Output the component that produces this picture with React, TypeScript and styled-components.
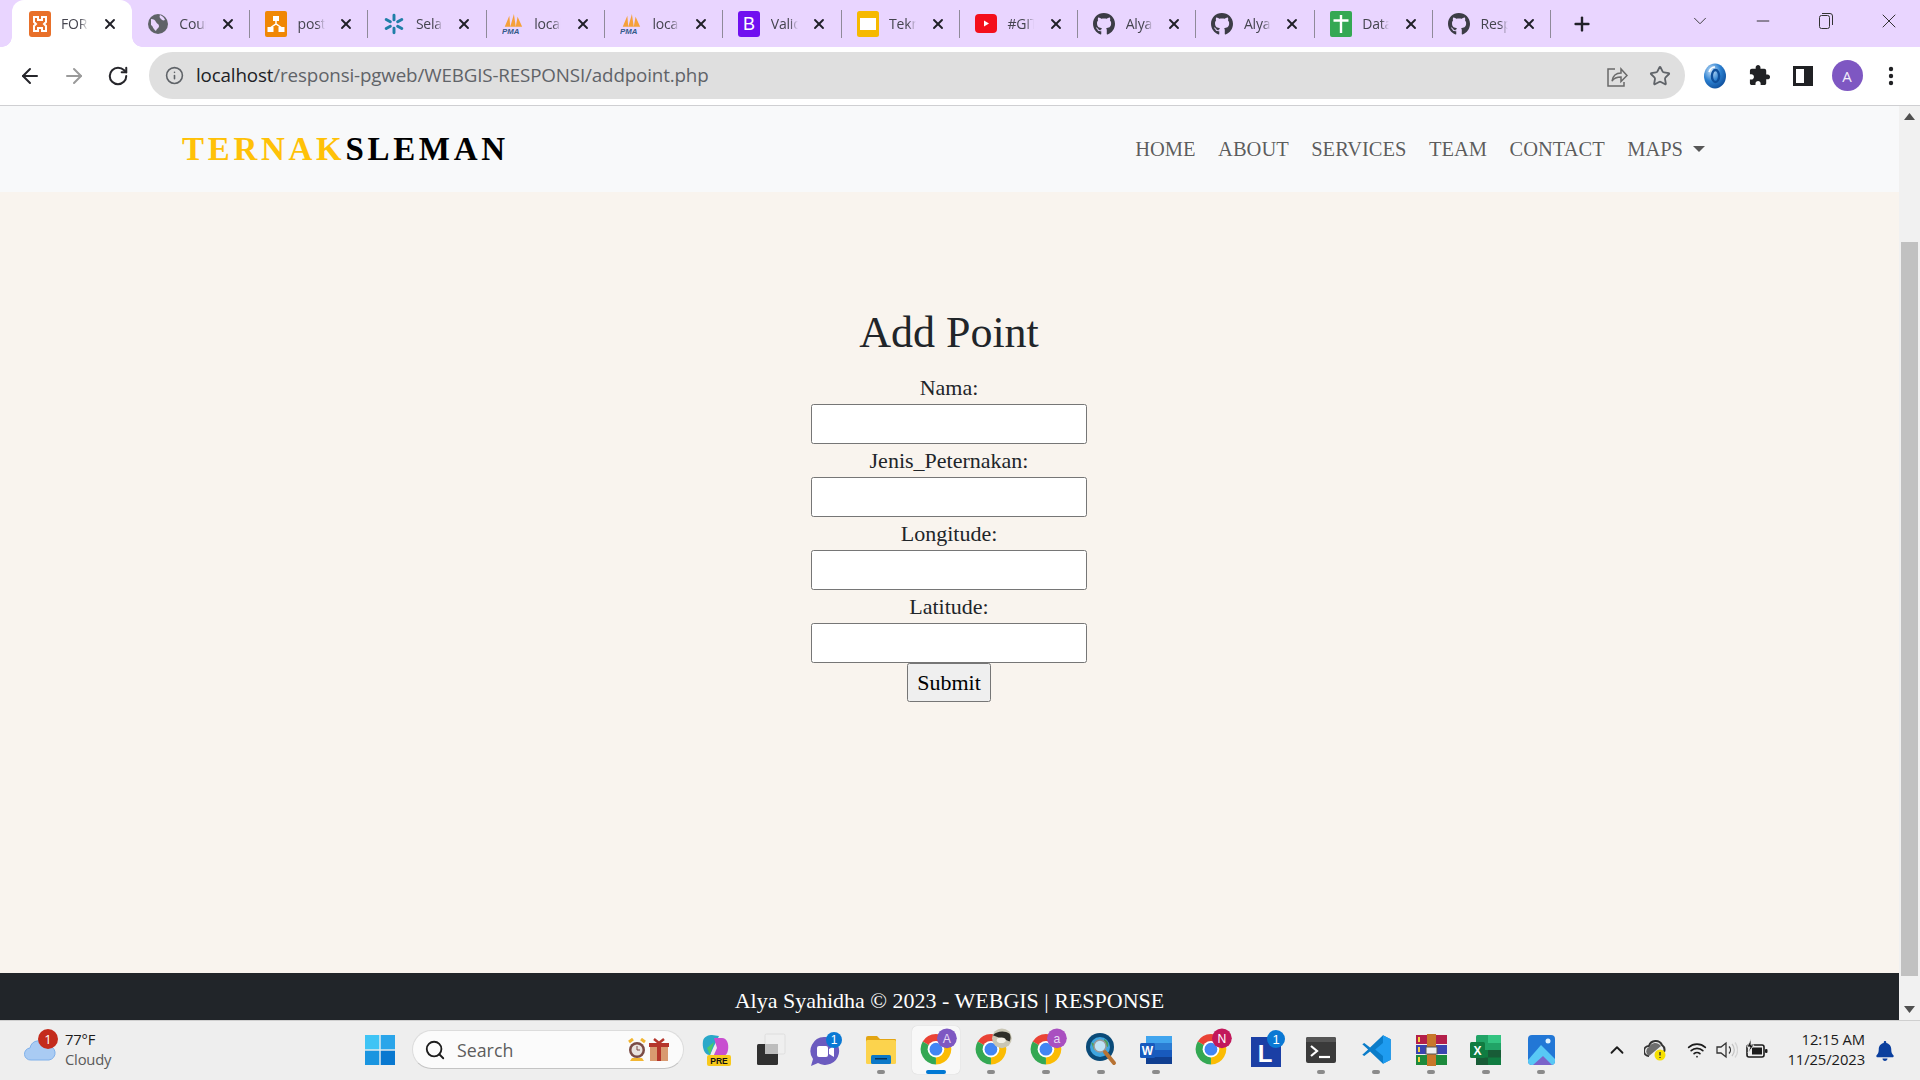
import React from 'react';
import styled, { createGlobalStyle } from 'styled-components';
import { ArrowLeft, ArrowRight, RotateCw, Info, Star, X, Plus, ChevronDown, Minus, ChevronUp, Wifi, Search } from 'lucide-react';
import { FaGithub, FaBell } from 'react-icons/fa';

const Global = createGlobalStyle`
  html, body { margin: 0; padding: 0; height: 100%; overflow: hidden; }
  body { font-family: "Liberation Serif", serif; background: #fff; }
  * { box-sizing: border-box; }
`;

const UI = '"Open Sans", "Noto Sans", sans-serif';

const Screen = styled.div`
  width: 1920px; height: 1080px; display: flex; flex-direction: column; overflow: hidden;
`;
const TabStrip = styled.div`
  height: 47px; background: #e9d5ff; display: flex; align-items: stretch; padding-left: 13.5px; flex: none;
`;
const Tab = styled.div<{ $active?: boolean }>`
  position: relative; flex: none;
  width: ${p => (p.$active ? '120.3px' : '118.3px')};
  margin-left: ${p => (p.$active ? '-2px' : '0')};
  padding-left: ${p => (p.$active ? '17px' : '15px')};
  display: flex; align-items: center;
  background: ${p => (p.$active ? '#fff' : 'transparent')};
  border-radius: ${p => (p.$active ? '12px 12px 0 0' : '0')};
  &::after {
    content: ''; position: absolute; right: 0; top: 10px; height: 28px; width: 1px;
    background: ${p => (p.$active ? 'transparent' : '#8f8a99')};
  }
`;
const Flare = styled.span<{ $side: 'left' | 'right' }>`
  position: absolute; bottom: 0; width: 10px; height: 10px;
  ${p => (p.$side === 'left' ? 'left: -10px;' : 'right: -10px;')}
  background: radial-gradient(circle at ${p => (p.$side === 'left' ? '0 0' : '100% 0')}, transparent 9.5px, #fff 10px);
`;
const FavSlot = styled.span`
  width: 22px; height: 26px; display: flex; align-items: center; justify-content: center; flex: none; color: #3c3c46;
`;
const TabTitle = styled.span`
  margin-left: 10.5px; width: 27px; overflow: hidden; white-space: nowrap; flex: none;
  font: 14px ${UI}; color: #45454f; letter-spacing: -0.2px;
  -webkit-mask-image: linear-gradient(to right, #000 70%, transparent);
  mask-image: linear-gradient(to right, #000 70%, transparent);
`;
const TabClose = styled.span`
  margin-left: 13.5px; width: 16px; height: 16px; display: flex; align-items: center; justify-content: center; color: #202028; flex: none;
`;
const NewTab = styled.span`
  margin-left: 20px; width: 22px; display: flex; align-items: center; justify-content: center; color: #202028; flex: none;
`;
const WindowControls = styled.div`
  margin-left: auto; display: flex; align-items: flex-start; color: #333;
`;
const WindowBtn = styled.span`
  width: 63px; height: 42px; display: flex; align-items: center; justify-content: center;
`;
const Toolbar = styled.div`
  height: 59px; flex: none; background: #fff; border-bottom: 1px solid #cfcfd2;
  display: flex; align-items: center; padding: 0 0 1px 18px;
`;
const NavIcon = styled.span<{ $dim?: boolean }>`
  width: 44px; height: 30px; margin-right: ${p => (p.$dim ? '1px' : '0')}; display: flex; align-items: center; justify-content: flex-start;
  color: ${p => (p.$dim ? '#9a9a9a' : '#26262b')};
  flex: none;
`;
const Omnibox = styled.div`
  height: 47px; width: 1536px; margin-left: -2px; border-radius: 24px; background: #dfdfdf; flex: none;
  display: flex; align-items: center; padding: 0 14px 0 16px;
`;
const Url = styled.div`
  margin-left: 12px; font: 18.8px ${UI}; color: #5f6368; white-space: nowrap; letter-spacing: -0.15px; margin-top: -1px;
`;
const UrlHost = styled.span` color: #202124; `;
const OmniActions = styled.div`
  margin-left: auto; display: flex; gap: 21px; align-items: center; color: #5f6368;
`;
const ToolActions = styled.div`
  margin-left: 8px; display: flex; align-items: center; gap: 0;
`;
const ToolBtn = styled.span`
  width: 44px; height: 36px; display: flex; align-items: center; justify-content: center; color: #202124;
`;
const Avatar = styled.span`
  width: 31px; height: 31px; border-radius: 50%; background: #7e57c2; color: #f3ecfb;
  font: 15px ${UI}; display: flex; align-items: center; justify-content: center;
`;
const Viewport = styled.div`
  flex: 1; min-height: 0; display: flex;
`;
const Page = styled.div`
  flex: 1; min-width: 0; display: flex; flex-direction: column;
`;
const NavBar = styled.nav`
  height: 86px; flex: none; background: #f8f9fa; display: flex; align-items: center; padding: 0 194px 0 182px;
`;
const Brand = styled.div`
  font: bold 33px "Liberation Serif", serif; letter-spacing: 3.7px; color: #ffc107; white-space: nowrap; padding-top: 1px;
`;
const BrandDark = styled.span` color: #000; `;
const NavLinks = styled.div`
  margin-left: auto; display: flex; align-items: center; gap: 22.5px;
`;
const NavLink = styled.a`
  font: 20.5px "Liberation Serif", serif; color: rgba(0,0,0,.65); display: flex; align-items: center; white-space: nowrap;
`;
const Caret = styled.span`
  margin-left: 10px; width: 0; height: 0; border-left: 6px solid transparent; border-right: 6px solid transparent; border-top: 6px solid rgba(0,0,0,.65);
`;
const Content = styled.main`
  flex: 1; background: #f9f4ee; padding: 111px 1px 0 0; display: flex; flex-direction: column; align-items: center; color: #212529;
`;
const Title = styled.h1`
  margin: 0 0 8px; font: 400 44px/60px "Liberation Serif", serif;
`;
const Form = styled.form`
  display: flex; flex-direction: column; align-items: center;
`;
const FieldLabel = styled.label`
  display: block; height: 33px; font: 22px/34px "Liberation Serif", serif; text-align: center;
`;
const Input = styled.input`
  display: block; width: 276px; height: 40px; background: #fff; border: 1px solid #767676; border-radius: 2.5px; padding: 0 2px; outline: none;
`;
const SubmitBtn = styled.button`
  width: 84px; height: 39px; margin-top: 0; background: #efefef; border: 1px solid #767676; border-radius: 2.5px;
  font: 22px "Liberation Serif", serif; color: #000; padding: 0;
`;
const Footer = styled.footer`
  height: 47px; flex: none; background: #212529; color: #fff; text-align: center;
  font: 22px/1 "Liberation Serif", serif; padding-top: 17px;
`;
const ScrollBar = styled.div`
  width: 21px; flex: none; background: #f1f1f1; display: flex; flex-direction: column; align-items: center; padding-bottom: 0;
`;
const ScrollBtn = styled.span`
  height: 21px; flex: none; display: flex; align-items: center; justify-content: center;
`;
const ScrollTrack = styled.div`
  flex: 1; width: 100%; padding: 115px 2px 23px 2px; display: flex;
`;
const ScrollThumb = styled.div`
  flex: 1; background: #c1c1c1;
`;
const Taskbar = styled.div`
  height: 60px; flex: none; background: #eeeeee; border-top: 1px solid #cfcfcf; display: flex; align-items: center; position: relative; padding-bottom: 2px;
`;
const Weather = styled.div`
  width: 352.5px; flex: none; display: flex; align-items: center; padding-left: 24px; position: relative;
`;
const CloudWrap = styled.span`
  display: flex; margin-top: -3px;
`;
const WeatherBadge = styled.span`
  position: absolute; left: 38px; top: -2px; width: 20px; height: 20px; border-radius: 50%; background: #c42b1c; color: #fff;
  font: 13px/20px ${UI}; text-align: center;
`;
const WeatherText = styled.div`
  margin: -2px 0 0 9px; font: 14.8px/20px ${UI}; color: #1b1b1b; letter-spacing: -0.2px;
`;
const WeatherSub = styled.div` color: #5a5a5a; `;
const Slot = styled.span<{ $active?: boolean }>`
  position: relative; flex: none; width: 55px; height: 48px; display: flex; align-items: center; justify-content: center;
  &::before {
    content: ''; position: absolute; left: 3.5px; right: 3.5px; top: 0; bottom: 0; border-radius: 5px; z-index: 0;
    background: ${p => (p.$active ? '#f8f8f8' : 'transparent')};
    box-shadow: ${p => (p.$active ? '0 0 1px rgba(0,0,0,.2)' : 'none')};
  }
  & > svg { position: relative; z-index: 1; }
`;
const Dot = styled.span<{ $active?: boolean }>`
  position: absolute; bottom: 0; left: 50%; transform: translateX(-50%); z-index: 1;
  width: ${p => (p.$active ? '20px' : '8px')}; height: 4px; border-radius: 2px;
  background: ${p => (p.$active ? '#0078d4' : '#8a8a8a')};
`;
const SearchPill = styled.div`
  width: 272px; height: 39px; margin: 0 4.5px; flex: none; background: #fbfbfb; border-radius: 20px; border: 1px solid #dcdcdc; border-bottom-color: #c4c4c4;
  display: flex; align-items: center; padding: 0 11px 0 11px; color: #1c1c1c;
`;
const SearchText = styled.span` margin-left: 11px; font: 17.8px ${UI}; color: #5d5d5d; `;
const SearchArt = styled.span` margin-left: auto; display: flex; gap: 2px; align-items: center; margin-right: 3px; `;
const Tray = styled.div`
  position: absolute; right: 0; top: 0; bottom: 2px; display: flex; align-items: center; color: #1c1c1c;
`;
const TrayIcon = styled.span<{ $w: number }>`
  width: ${p => p.$w}px; display: flex; align-items: center; justify-content: center;
`;
const Clock = styled.div`
  margin: -1px 0 0 14px; text-align: right; font: 14.8px/20px ${UI}; color: #1b1b1b; letter-spacing: -0.1px;
`;
const BellSlot = styled.span`
  width: 40px; display: flex; justify-content: center; color: #0a3f9e; margin-right: 15px; padding-top: 2px;
`;

/* ---------- drawings ---------- */
const Xampp = () => (
  <svg width="22" height="26" viewBox="0 0 22 26"><rect width="22" height="26" rx="3" fill="#e8702a" />
    <path d="M5 6h4v3h4V6h4v5l-2 2 2 2v5h-4v-3H9v3H5v-5l2-2-2-2z" fill="none" stroke="#fff" strokeWidth="2" /></svg>
);
const Globe = () => (
  <svg width="22" height="22" viewBox="0 0 22 22"><circle cx="11" cy="11" r="10" fill="#5f6368" />
    <path d="M4 6c3 0 4 1 5 3s3 2 3 4-2 2-3 5c-3-2-3-5-5-6zM13 2c2 1 4 2 5 5-2 1-3 0-4-1s-2-2-1-4z" fill="#e9d5ff" /></svg>
);
const Drawio = () => (
  <svg width="22" height="26" viewBox="0 0 22 26"><rect width="22" height="26" rx="2" fill="#f08705" />
    <path d="M11 9v4M5 17l6-4 6 4" stroke="#fff" strokeWidth="1.5" fill="none" /><rect x="8" y="5" width="6" height="5" fill="#fff" /><rect x="2.5" y="16" width="6" height="5" fill="#fff" /><rect x="13.5" y="16" width="6" height="5" fill="#fff" /></svg>
);
const Kaggleish = () => (
  <svg width="24" height="24" viewBox="0 0 24 24" stroke="#1f7ea8" strokeWidth="3.2" strokeLinecap="round">
    <path d="M12 2.5v5M12 16.5v5" /><path d="M3.5 7l4.5 2.6M16 14.4l4.5 2.6M3.5 17l4.5-2.6M16 9.6l4.5-2.6" /></svg>
);
const Pma = () => (
  <svg width="24" height="26" viewBox="0 0 24 26"><path d="M3 16L8 4l1 12zM9 16l4-14 2 14zM15 16l2-11 5 11z" fill="#f5a13a" />
    <text x="0" y="24" fontFamily="Liberation Sans" fontSize="8.5" fontWeight="bold" fontStyle="italic" fill="#345a8a">PMA</text></svg>
);
const BootstrapIcon = () => (
  <svg width="22" height="26" viewBox="0 0 22 26"><rect width="22" height="26" rx="3" fill="#7010f0" />
    <text x="11" y="19" textAnchor="middle" fontFamily="Liberation Sans" fontSize="18" fill="#fff">B</text></svg>
);
const Slides = () => (
  <svg width="22" height="26" viewBox="0 0 22 26"><rect width="22" height="26" rx="2.5" fill="#f6b900" /><rect x="3" y="7" width="16" height="12" fill="#fff" /></svg>
);
const YouTube = () => (
  <svg width="22" height="20" viewBox="0 0 22 20"><rect width="22" height="19" rx="4" fill="#f40f1b" /><path d="M9 6.5l5 3-5 3z" fill="#fff" /></svg>
);
const Sheets = () => (
  <svg width="22" height="26" viewBox="0 0 22 26"><rect width="22" height="26" rx="2" fill="#34a853" /><path d="M11 4v18M3.5 9.5h15" stroke="#fff" strokeWidth="2.4" /></svg>
);

const Chrome = ({ badge }: { badge?: React.ReactNode }) => (
  <svg width="36" height="38.5" viewBox="0 0 28 30" overflow="visible">
    <g transform="translate(1 2) scale(1.08)">
      <path d="M12 12L2.47 6.5A11 11 0 0 1 21.53 6.5Z" fill="#ea4335" />
      <path d="M12 12L21.53 6.5A11 11 0 0 1 12 23Z" fill="#fbbc04" />
      <path d="M12 12L12 23A11 11 0 0 1 2.47 6.5Z" fill="#34a853" />
      <circle cx="12" cy="12" r="6" fill="#fff" /><circle cx="12" cy="12" r="4.6" fill="#4285f4" />
    </g>
    {badge}
  </svg>
);

const Copilot = () => (
  <svg width="32" height="34" viewBox="0 0 32 34"><path d="M3 8c1-5 6-6 9-6l7 1-5 10-4 9c-6 0-8-8-7-14z" fill="#2aa8c9" />
    <path d="M14 5h8c5 0 7 6 6 12s-5 7-9 7h-6l4-9z" fill="#c84fd0" /><path d="M7 15l7-6-4 13z" fill="#4aca6a" />
    <rect x="7" y="22" width="24" height="11" rx="2" fill="#f8c91c" />
    <text x="19" y="31" textAnchor="middle" fontFamily="Liberation Sans" fontSize="8.5" fontWeight="bold" fill="#111">PRE</text></svg>
);
const TaskView = () => (
  <svg width="30" height="34" viewBox="0 0 30 34"><rect x="9" y="1" width="20" height="20" rx="1.5" fill="#efefef" stroke="#dedede" />
    <rect x="1" y="11" width="21" height="21" rx="1.5" fill="#303030" /><rect x="9" y="11" width="13" height="10" fill="#bdbdbd" /></svg>
);
const Teams = () => (
  <svg width="38" height="36" viewBox="0 0 38 36"><path d="M17 5a14 14 0 1 1-6 26l-7 3 2-7A14 14 0 0 1 17 5z" fill="#6b5bbf" />
    <rect x="10" y="14" width="11" height="11" rx="2" fill="#fff" /><path d="M22 17l5-3v11l-5-3z" fill="#fff" />
    <circle cx="27" cy="8" r="8" fill="#0a78d4" /><text x="27" y="12" textAnchor="middle" fontFamily="Liberation Sans" fontSize="12" fill="#fff">1</text></svg>
);
const Folder = () => (
  <svg width="32" height="30" viewBox="0 0 32 30"><path d="M1 3a2 2 0 0 1 2-2h9l3 3h15a1 1 0 0 1 1 1v3H1z" fill="#e3a512" /><rect x="1" y="5" width="30" height="24" rx="1.5" fill="#fcd34d" />
    <rect x="6" y="20" width="20" height="9" rx="1.5" fill="#0b78c8" /><rect x="10" y="23" width="12" height="1.5" fill="#06335d" /></svg>
);
const Magnifier = () => (
  <svg width="32" height="36" viewBox="0 0 32 36"><circle cx="15" cy="15" r="14" fill="#0a4a78" /><circle cx="15" cy="15" r="10" fill="#3fa6e0" />
    <path d="M19 7c4 2 5 4 4 8l-4-2zM6 10l5 3-2 5z" fill="#4b9e5c" /><circle cx="15" cy="14" r="6" fill="#bfe3f5" stroke="#9a9a9a" strokeWidth="1.5" />
    <path d="M20 20l9 11" stroke="#b87333" strokeWidth="4" strokeLinecap="round" /></svg>
);
const Word = () => (
  <svg width="32" height="30" viewBox="0 0 32 30"><rect x="6" y="1" width="26" height="28" rx="1.5" fill="#2b7cd3" /><rect x="6" y="1" width="26" height="7" fill="#41a5ee" /><rect x="6" y="15" width="26" height="7" fill="#185abd" /><rect x="6" y="22" width="26" height="7" fill="#103f91" />
    <rect x="0" y="8" width="15" height="15" rx="1.5" fill="#185abd" /><text x="7.5" y="20" textAnchor="middle" fontFamily="Liberation Sans" fontSize="12" fontWeight="bold" fill="#fff">W</text></svg>
);
const LApp = () => (
  <svg width="38" height="38" viewBox="0 0 38 38" overflow="visible"><rect x="4" y="6" width="30" height="30" fill="#1b3fa5" />
    <text x="18" y="31" textAnchor="middle" fontFamily="Liberation Sans" fontSize="24" fontWeight="bold" fill="#fff">L</text>
    <circle cx="29" cy="8" r="9" fill="#0a78d4" /><text x="29" y="12.5" textAnchor="middle" fontFamily="Liberation Sans" fontSize="13" fill="#fff">1</text></svg>
);
const Terminal = () => (
  <svg width="30" height="26" viewBox="0 0 30 26"><rect width="30" height="26" rx="2" fill="#3a3a3a" /><path d="M0 2a2 2 0 0 1 2-2h26a2 2 0 0 1 2 2v3H0z" fill="#555" />
    <path d="M5 9l6 5-6 5" stroke="#fff" strokeWidth="2.2" fill="none" /><path d="M13 20h11" stroke="#fff" strokeWidth="2.2" /></svg>
);
const VsCode = () => (
  <svg width="31" height="31" viewBox="0 0 24 24"><path d="M17 1l6 3v16l-6 3-10-9.5L2.5 17 1 16l4.5-4L1 8l1.5-1L7 10.5z" fill="#0a7cc9" />
    <path d="M17 1l6 3v16l-6 3V17l-6-5 6-5z" fill="#1f9cf0" /></svg>
);
const WinRar = () => (
  <svg width="31" height="32" viewBox="0 0 31 32"><rect x="0" y="1" width="31" height="9" fill="#b31f4a" /><rect x="0" y="11" width="31" height="9" fill="#3a44b0" /><rect x="0" y="21" width="31" height="10" fill="#1c8a3c" />
    <rect x="11" y="0" width="9" height="32" fill="#c8772a" /><rect x="10" y="13" width="11" height="7" fill="#eee" stroke="#555" /><path d="M3 3v5M3 13v5M3 23v5" stroke="#f5d040" strokeWidth="2" /></svg>
);
const Excel = () => (
  <svg width="32" height="32" viewBox="0 0 32 32"><rect x="6" y="1" width="25" height="30" rx="1.5" fill="#21a366" /><rect x="18" y="1" width="13" height="8" fill="#33c481" /><rect x="6" y="16" width="25" height="15" fill="#107c41" /><rect x="18" y="16" width="13" height="7.5" fill="#185c37" /><rect x="6" y="23.5" width="12" height="7.5" fill="#185c37" />
    <rect x="0" y="8" width="15" height="16" rx="1.5" fill="#107c41" /><text x="7.5" y="21" textAnchor="middle" fontFamily="Liberation Sans" fontSize="12" fontWeight="bold" fill="#fff">X</text></svg>
);
const Photos = () => (
  <svg width="27" height="30" viewBox="0 0 27 30"><rect width="27" height="30" rx="4" fill="#2277d6" /><circle cx="20" cy="6" r="2.5" fill="#dff1ff" />
    <path d="M0 25l13-15 14 14v2a4 4 0 0 1-4 4H4a4 4 0 0 1-4-4z" fill="#58c8f5" /><path d="M5 30l10-9 9 9z" fill="#7a63c9" /></svg>
);
const WindowsLogo = () => (
  <svg width="30" height="30" viewBox="0 0 30 30"><rect width="14.3" height="14.3" fill="#3fc4f5" /><rect x="15.7" width="14.3" height="14.3" fill="#2aa5ea" /><rect y="15.7" width="14.3" height="14.3" fill="#1a95e0" /><rect x="15.7" y="15.7" width="14.3" height="14.3" fill="#0878d0" /></svg>
);
const CloudArt = () => (
  <svg width="32" height="26" viewBox="0 0 32 26"><path d="M7 25a6 6 0 0 1-1-12 9 9 0 0 1 17-2 7 7 0 0 1 2 14z" fill="#a9cbf3" stroke="#7fb0ea" /></svg>
);
const AlarmGift = () => (
  <>
    <svg width="20" height="24" viewBox="0 0 20 24"><path d="M2 4l4-3M18 4l-4-3" stroke="#f2b632" strokeWidth="3" /><circle cx="10" cy="12" r="8" fill="#7a4b46" /><circle cx="10" cy="12" r="5.5" fill="#e9e3e0" /><path d="M10 8v4h3" stroke="#7a4b46" fill="none" /><path d="M5 20h10l2 3H3z" fill="#f2b632" /></svg>
    <svg width="20" height="24" viewBox="0 0 20 24"><rect x="1" y="8" width="18" height="15" fill="#d99a70" /><rect x="0" y="5" width="20" height="4" fill="#b5352b" /><rect x="8" y="5" width="4" height="18" fill="#b5352b" /><path d="M10 5L5 1M10 5l5-4" stroke="#b5352b" strokeWidth="2.5" /></svg>
  </>
);
const Share = () => (
  <svg width="22" height="22" viewBox="0 0 22 22" fill="none" stroke="#6a6a6a" strokeWidth="1.5"><path d="M9 4H2v17h16v-4" /><path d="M6 16c1-6 5-8 9-8V4l6 6.5-6 6V12c-4 0-7 1-9 4z" /></svg>
);
const Panel = () => (
  <svg width="20" height="20" viewBox="0 0 20 20"><rect x="1.5" y="1.5" width="17" height="17" fill="#fff" stroke="#202124" strokeWidth="3" /><rect x="11" y="1" width="8" height="18" fill="#202124" /></svg>
);
const Dots = () => (
  <svg width="6" height="22" viewBox="0 0 6 22" fill="#202124"><circle cx="3" cy="4" r="2.2" /><circle cx="3" cy="11" r="2.2" /><circle cx="3" cy="18" r="2.2" /></svg>
);
const IeExt = () => (
  <svg width="24" height="26" viewBox="0 0 24 26">
    <defs><radialGradient id="ie" cx="35%" cy="30%" r="75%"><stop offset="0" stopColor="#cfe6fa" /><stop offset="0.55" stopColor="#2a7fd0" /><stop offset="1" stopColor="#0f4f9c" /></radialGradient></defs>
    <ellipse cx="12" cy="13" rx="11" ry="12.5" fill="url(#ie)" /><ellipse cx="12.5" cy="13" rx="3.6" ry="6" fill="none" stroke="#0f4f9c" strokeWidth="2.4" /><path d="M6 9c1-3 3-5 6-5" fill="none" stroke="#fff" strokeWidth="1.5" /></svg>
);
const Puzzle = () => (
  <svg width="23" height="23" viewBox="0 0 24 24" fill="#202124"><path d="M20.5 11H19V7c0-1.1-.9-2-2-2h-4V3.5C13 2.12 11.88 1 10.5 1S8 2.12 8 3.5V5H4c-1.1 0-1.99.9-1.99 2v3.8H3.5c1.49 0 2.7 1.21 2.7 2.7s-1.21 2.7-2.7 2.7H2V20c0 1.1.9 2 2 2h3.8v-1.5c0-1.49 1.21-2.7 2.7-2.7 1.49 0 2.7 1.21 2.7 2.7V22H17c1.1 0 2-.9 2-2v-4h1.5c1.38 0 2.5-1.12 2.5-2.5S21.88 11 20.5 11z" /></svg>
);
const RestoreIcon = () => (
  <svg width="14" height="16" viewBox="0 0 14 16" fill="none" stroke="#333"><rect x=".5" y="2.5" width="10" height="13" rx="2" /><path d="M3 .5h8a2.5 2.5 0 0 1 2.5 2.5v9" /></svg>
);
const OneDrive = () => (
  <svg width="24" height="22" viewBox="0 0 24 22"><path d="M5 17a5 5 0 0 1 0-10 7 7 0 0 1 13-1 6 6 0 0 1 2 7" fill="none" stroke="#333" strokeWidth="2" /><path d="M5 17a5 5 0 0 1 0-9 7 7 0 0 1 12-1z" fill="#6d6d6d" /><circle cx="16" cy="16" r="5.5" fill="#f6e000" /><path d="M16 13v3.5M16 18v1" stroke="#333" strokeWidth="1.4" /></svg>
);
const Speaker = () => (
  <svg width="22" height="20" viewBox="0 0 22 20" fill="none" stroke="#333" strokeWidth="1.3"><path d="M1 7h4l5-4v14l-5-4H1z" /><path d="M13 6.5a5 5 0 0 1 0 7" /><path d="M16 4a9 9 0 0 1 0 12" stroke="#c4c4c4" /><path d="M19 2.5a12 12 0 0 1 0 15" stroke="#d4d4d4" /></svg>
);
const Battery = () => (
  <svg width="24" height="22" viewBox="0 0 24 22"><rect x="2" y="6" width="17" height="12" rx="2" fill="none" stroke="#1c1c1c" strokeWidth="1.6" /><rect x="7" y="8.5" width="10" height="7" fill="#1c1c1c" /><rect x="20" y="10" width="2.5" height="4" rx="1" fill="#1c1c1c" /><path d="M6 0L2 8h3l-2 6 6-8H6z" fill="#1c1c1c" stroke="#eee" strokeWidth=".8" /></svg>
);
const Arrow = ({ up }: { up?: boolean }) => (
  <svg width="11" height="7" viewBox="0 0 11 7"><path d={up ? 'M5.5 0L11 7H0z' : 'M0 0h11L5.5 7z'} fill="#505050" /></svg>
);
const Badge = ({ fill, label, textFill = '#e8d9f5' }: { fill: string; label: string; textFill?: string }) => (
  <>
    <circle cx="22.5" cy="6.5" r="7.7" fill={fill} />
    <text x="22.5" y="10" textAnchor="middle" fontFamily="Liberation Sans" fontSize="9.5" fill={textFill}>{label}</text>
  </>
);
const PhotoBadge = () => (
  <>
    <circle cx="22.5" cy="6.5" r="7.7" fill="#c9c6b4" />
    <path d="M15.5 4c3-3 9-4 13-1 1 2 1 4 0 6-5-3-9-3-13-5z" fill="#2e2e28" />
    <ellipse cx="22" cy="8" rx="3.5" ry="2.2" fill="#f1efe6" />
  </>
);

const tabs: { icon: React.ReactNode; title: string; active?: boolean }[] = [
  { icon: <Xampp />, title: 'FORM', active: true },
  { icon: <Globe />, title: 'Cour' },
  { icon: <Drawio />, title: 'post' },
  { icon: <Kaggleish />, title: 'Selam' },
  { icon: <Pma />, title: 'local' },
  { icon: <Pma />, title: 'local' },
  { icon: <BootstrapIcon />, title: 'Valid' },
  { icon: <Slides />, title: 'Tekn' },
  { icon: <YouTube />, title: '#GIT' },
  { icon: <FaGithub size={26} />, title: 'Alya' },
  { icon: <FaGithub size={26} />, title: 'Alya' },
  { icon: <Sheets />, title: 'Data' },
  { icon: <FaGithub size={26} />, title: 'Resp' },
];

const dock: { icon: React.ReactNode; dot?: boolean; active?: boolean }[] = [
  { icon: <Copilot /> },
  { icon: <TaskView /> },
  { icon: <Teams /> },
  { icon: <Folder />, dot: true },
  { icon: <Chrome badge={<Badge fill="#7e57c2" label="A" />} />, dot: true, active: true },
  { icon: <Chrome badge={<PhotoBadge />} />, dot: true },
  { icon: <Chrome badge={<Badge fill="#a94fc0" label="a" />} />, dot: true },
  { icon: <Magnifier />, dot: true },
  { icon: <Word />, dot: true },
  { icon: <Chrome badge={<Badge fill="#c2185b" label="N" textFill="#fff" />} /> },
  { icon: <LApp /> },
  { icon: <Terminal />, dot: true },
  { icon: <VsCode />, dot: true },
  { icon: <WinRar />, dot: true },
  { icon: <Excel />, dot: true },
  { icon: <Photos />, dot: true },
];

export default function App() {
  return (
    <Screen>
      <Global />
      <TabStrip>
        {tabs.map((t, i) => (
          <Tab key={i} $active={t.active}>
            {t.active && <Flare $side="left" />}
            {t.active && <Flare $side="right" />}
            <FavSlot>{t.icon}</FavSlot>
            <TabTitle>{t.title}</TabTitle>
            <TabClose><X size={16} strokeWidth={2.8} /></TabClose>
          </Tab>
        ))}
        <NewTab><Plus size={22} strokeWidth={2.6} /></NewTab>
        <WindowControls>
          <WindowBtn><ChevronDown size={22} strokeWidth={1} /></WindowBtn>
          <WindowBtn><Minus size={20} strokeWidth={1.2} /></WindowBtn>
          <WindowBtn><RestoreIcon /></WindowBtn>
          <WindowBtn><X size={24} strokeWidth={1} /></WindowBtn>
        </WindowControls>
      </TabStrip>
      <Toolbar>
        <NavIcon><ArrowLeft size={24} strokeWidth={2} /></NavIcon>
        <NavIcon $dim><ArrowRight size={24} strokeWidth={2} /></NavIcon>
        <NavIcon><RotateCw size={22} strokeWidth={2.2} /></NavIcon>
        <Omnibox>
          <Info size={19} color="#5f6368" strokeWidth={2} />
          <Url><UrlHost>localhost</UrlHost>/responsi-pgweb/WEBGIS-RESPONSI/addpoint.php</Url>
          <OmniActions>
            <Share />
            <Star size={22} strokeWidth={2} />
          </OmniActions>
        </Omnibox>
        <ToolActions>
          <ToolBtn><IeExt /></ToolBtn>
          <ToolBtn><Puzzle /></ToolBtn>
          <ToolBtn><Panel /></ToolBtn>
          <ToolBtn><Avatar>A</Avatar></ToolBtn>
          <ToolBtn><Dots /></ToolBtn>
        </ToolActions>
      </Toolbar>
      <Viewport>
        <Page>
          <NavBar>
            <Brand>TERNAK<BrandDark>SLEMAN</BrandDark></Brand>
            <NavLinks>
              <NavLink>HOME</NavLink>
              <NavLink>ABOUT</NavLink>
              <NavLink>SERVICES</NavLink>
              <NavLink>TEAM</NavLink>
              <NavLink>CONTACT</NavLink>
              <NavLink>MAPS<Caret /></NavLink>
            </NavLinks>
          </NavBar>
          <Content>
            <Title>Add Point</Title>
            <Form>
              <FieldLabel>Nama:</FieldLabel>
              <Input type="text" />
              <FieldLabel>Jenis_Peternakan:</FieldLabel>
              <Input type="text" />
              <FieldLabel>Longitude:</FieldLabel>
              <Input type="text" />
              <FieldLabel>Latitude:</FieldLabel>
              <Input type="text" />
              <SubmitBtn type="button">Submit</SubmitBtn>
            </Form>
          </Content>
          <Footer>Alya Syahidha © 2023 - WEBGIS | RESPONSE</Footer>
        </Page>
        <ScrollBar>
          <ScrollBtn><Arrow up /></ScrollBtn>
          <ScrollTrack><ScrollThumb /></ScrollTrack>
          <ScrollBtn><Arrow /></ScrollBtn>
        </ScrollBar>
      </Viewport>
      <Taskbar>
        <Weather>
          <CloudWrap><CloudArt /></CloudWrap>
          <WeatherBadge>1</WeatherBadge>
          <WeatherText>77°F<WeatherSub>Cloudy</WeatherSub></WeatherText>
        </Weather>
        <Slot><WindowsLogo /></Slot>
        <SearchPill>
          <Search size={22} strokeWidth={2} />
          <SearchText>Search</SearchText>
          <SearchArt><AlarmGift /></SearchArt>
        </SearchPill>
        {dock.map((d, i) => (
          <Slot key={i} $active={d.active}>
            {d.icon}
            {d.dot && <Dot $active={d.active} />}
          </Slot>
        ))}
        <Tray>
          <TrayIcon $w={26}><ChevronUp size={22} strokeWidth={2} /></TrayIcon>
          <TrayIcon $w={51}><OneDrive /></TrayIcon>
          <TrayIcon $w={32}><Wifi size={20} strokeWidth={2} /></TrayIcon>
          <TrayIcon $w={28}><Speaker /></TrayIcon>
          <TrayIcon $w={32}><Battery /></TrayIcon>
          <Clock>12:15 AM<br />11/25/2023</Clock>
          <BellSlot><FaBell size={20} /></BellSlot>
        </Tray>
      </Taskbar>
    </Screen>
  );
}
